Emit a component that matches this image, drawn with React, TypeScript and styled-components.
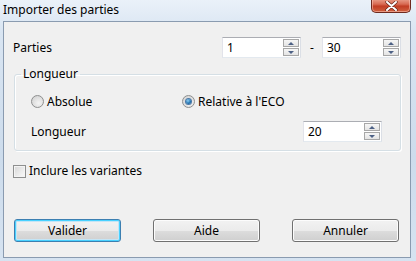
import styled, { createGlobalStyle, css } from 'styled-components'

const GlobalStyle = createGlobalStyle`
  html, body {
    margin: 0;
    padding: 0;
    background: #dce7f3;
  }
  body {
    font-family: "Noto Sans", "Open Sans", sans-serif;
    font-size: 12px;
    color: #000;
  }
`

const Frame = styled.div`
  width: 416px;
  height: 261px;
  box-sizing: border-box;
  display: flex;
  flex-direction: column;
  padding: 0 5px 3px 3px;
  background: linear-gradient(180deg, #eaf1f9 0%, #d9e5f2 12%, #cddcec 60%, #d6e3f1 100%);
  overflow: hidden;
`

const TitleBar = styled.div`
  height: 21px;
  display: flex;
  align-items: flex-start;
  justify-content: space-between;
`

const Title = styled.div`
  padding-top: 2px;
  font-size: 12px;
  line-height: 16px;
  color: #000;
`

const CloseButton = styled.div`
  width: 40px;
  height: 14px;
  flex-shrink: 0;
  margin-top: -1px;
  box-sizing: border-box;
  border: 1px solid #6e2a1f;
  border-top: none;
  border-radius: 0 0 5px 5px;
  background: linear-gradient(180deg, #e9a08c 0%, #d86a52 40%, #c23d24 55%, #d0613f 100%);
  box-shadow: inset 0 0 0 1px rgba(255, 200, 185, 0.55);
  display: flex;
  align-items: center;
  justify-content: center;

  svg {
    display: block;
  }
`

const Client = styled.div`
  flex: 1;
  box-sizing: border-box;
  border: 1px solid #8a9bb0;
  background: #f0f0f0;
  display: flex;
  flex-direction: column;
  padding: 15px 9px 0 9px;
`

const Row = styled.div`
  display: flex;
  align-items: center;
`

const Label = styled.span<{ $width?: number }>`
  ${(p) =>
    p.$width &&
    css`
      width: ${p.$width}px;
    `}
  line-height: 16px;
`

const Dash = styled.span`
  width: 20px;
  text-align: center;
  margin-left: 1px;
`

const SpinWrap = styled.div`
  width: 79px;
  height: 21px;
  box-sizing: border-box;
  border: 1px solid #abadb3;
  border-color: #abadb3 #dbdfe6 #e3e9ef #e2e3ea;
  background: #fff;
  display: flex;
  padding: 1px;
`

const SpinValue = styled.div`
  flex: 1;
  padding-left: 3px;
  line-height: 17px;
`

const SpinButtons = styled.div`
  width: 16px;
  display: flex;
  flex-direction: column;
  gap: 1px;
`

const SpinButton = styled.div`
  flex: 1;
  box-sizing: border-box;
  border: 1px solid #a7a7a7;
  background: linear-gradient(180deg, #f6f6f6 0%, #e4e4e4 100%);
  display: flex;
  align-items: center;
  justify-content: center;
`

const Arrow = styled.div<{ $down?: boolean }>`
  width: 0;
  height: 0;
  border-left: 3px solid transparent;
  border-right: 3px solid transparent;
  ${(p) =>
    p.$down
      ? css`
          border-top: 3px solid #4d6185;
        `
      : css`
          border-bottom: 3px solid #4d6185;
        `}
`

function SpinBox({ value }: { value: string }) {
  return (
    <SpinWrap>
      <SpinValue>{value}</SpinValue>
      <SpinButtons>
        <SpinButton>
          <Arrow />
        </SpinButton>
        <SpinButton>
          <Arrow $down />
        </SpinButton>
      </SpinButtons>
    </SpinWrap>
  )
}

const Group = styled.fieldset`
  margin: 9px 0 0 1px;
  width: 387px;
  height: 84px;
  box-sizing: border-box;
  border: 1px solid #d5dfe5;
  border-radius: 3px;
  box-shadow: inset 1px 1px 0 #fff, 1px 1px 0 #fff;
  padding: 10px 18px 0 16px;
  display: flex;
  flex-direction: column;
`

const Legend = styled.legend`
  padding: 0 2px;
  margin-left: -10px;
  line-height: 14px;
`

const RadioRow = styled(Row)`
  margin-top: 2px;
`

const RadioOption = styled.label<{ $width?: number }>`
  display: flex;
  align-items: center;
  gap: 3px;
  ${(p) =>
    p.$width &&
    css`
      width: ${p.$width}px;
    `}
`

const RadioCircle = styled.span<{ $checked?: boolean }>`
  width: 13px;
  height: 13px;
  box-sizing: border-box;
  border-radius: 50%;
  border: 1px solid #8e8f8f;
  background: radial-gradient(circle at 60% 65%, #f4f4f4 0%, #d9d9d9 70%, #c9c9c9 100%);
  display: flex;
  align-items: center;
  justify-content: center;

  &::after {
    content: '';
    display: ${(p) => (p.$checked ? 'block' : 'none')};
    width: 5px;
    height: 5px;
    border-radius: 50%;
    background: radial-gradient(circle at 40% 35%, #8fd0f5 0%, #1c6fae 60%, #0b3f78 100%);
    box-shadow: 0 0 0 1px #4b78a6;
  }
`

const LengthRow = styled(Row)`
  justify-content: space-between;
  margin-top: 11px;
`

const CheckRow = styled(Row)`
  margin-top: 12px;
  gap: 3px;
`

const CheckBox = styled.span`
  width: 13px;
  height: 13px;
  box-sizing: border-box;
  border: 1px solid #8e8f8f;
  background: linear-gradient(135deg, #d6d6d6 0%, #ededed 60%, #fafafa 100%);
  box-shadow: inset 0 0 0 1px #f4f4f4;
`

const ButtonRow = styled.div`
  margin-top: 40px;
  padding-left: 1px;
  display: flex;
  gap: 32px;
`

const Button = styled.button<{ $default?: boolean }>`
  width: 107px;
  height: 23px;
  box-sizing: border-box;
  font-family: inherit;
  font-size: 12px;
  color: #000;
  padding: 0;
  border-radius: 3px;
  border: 1px solid #707070;
  background: linear-gradient(180deg, #f2f2f2 0%, #ebebeb 50%, #dddddd 51%, #cfcfcf 100%);
  box-shadow: inset 0 0 0 1px #fcfcfc;
  ${(p) =>
    p.$default &&
    css`
      border-color: #3c7fb1;
      box-shadow: inset 0 0 0 1px #48d1ff, inset 0 0 0 2px #c4e5f6;
    `}
`

export default function App() {
  return (
    <>
      <GlobalStyle />
      <Frame>
        <TitleBar>
          <Title>Importer des parties</Title>
          <CloseButton>
            <svg width="13" height="10" viewBox="0 0 13 10">
              <path
                d="M2 1 L11 9 M11 1 L2 9"
                stroke="#5a1c12"
                strokeWidth="3.2"
                strokeLinecap="round"
              />
              <path
                d="M2 1 L11 9 M11 1 L2 9"
                stroke="#fff"
                strokeWidth="2"
                strokeLinecap="round"
              />
            </svg>
          </CloseButton>
        </TitleBar>
        <Client>
          <Row>
            <Label $width={209}>Parties</Label>
            <SpinBox value="1" />
            <Dash>-</Dash>
            <SpinBox value="30" />
          </Row>
          <Group>
            <Legend>Longueur</Legend>
            <RadioRow>
              <RadioOption $width={151}>
                <RadioCircle />
                Absolue
              </RadioOption>
              <RadioOption>
                <RadioCircle $checked />
                Relative à l'ECO
              </RadioOption>
            </RadioRow>
            <LengthRow>
              <Label>Longueur</Label>
              <SpinBox value="20" />
            </LengthRow>
          </Group>
          <CheckRow>
            <CheckBox />
            <Label>Inclure les variantes</Label>
          </CheckRow>
          <ButtonRow>
            <Button $default>Valider</Button>
            <Button>Aide</Button>
            <Button>Annuler</Button>
          </ButtonRow>
        </Client>
      </Frame>
    </>
  )
}
